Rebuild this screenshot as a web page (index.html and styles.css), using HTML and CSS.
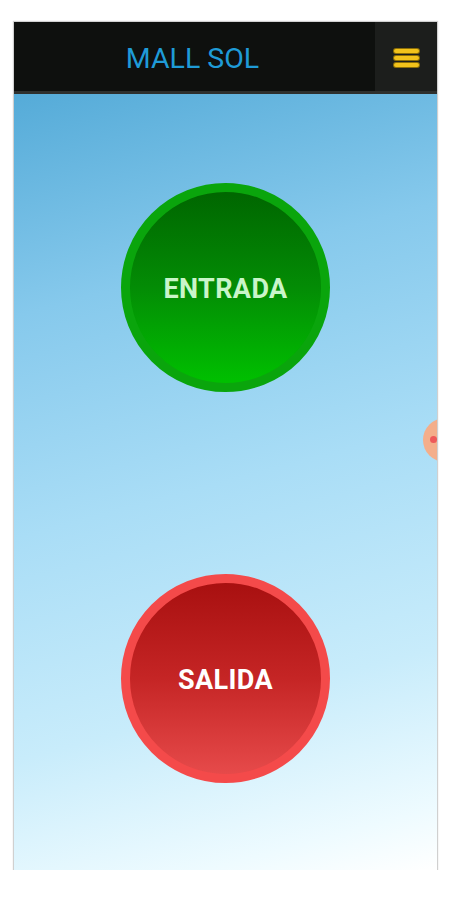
FILE: index.html
```html
<!DOCTYPE html>
<html lang="es">
<head>
<meta charset="utf-8">
<title>MALL SOL</title>
<link rel="stylesheet" href="styles.css">
</head>
<body>
<div class="phone">
  <header class="topbar">
    <h1 class="title">MALL SOL</h1>
    <button class="menu" aria-label="menu">
      <span class="bar"></span><span class="bar"></span><span class="bar"></span>
    </button>
  </header>
  <main class="content">
    <button class="circle entrada"><span>ENTRADA</span></button>
    <button class="circle salida"><span>SALIDA</span></button>
    <div class="blob"><span class="dot"></span></div>
  </main>
</div>
</body>
</html>
```

FILE: styles.css
```css
* { box-sizing: border-box; }
html, body { margin: 0; padding: 0; background: #ffffff; }
body { font-family: Roboto, "Noto Sans", sans-serif; }

.phone {
  margin: 22px 0 0 14px;
  width: 423px;
  height: 848px;
  display: flex;
  flex-direction: column;
  box-shadow: 0 0 1px 1px rgba(120,120,120,0.35);
  overflow: hidden;
}

.topbar {
  height: 72px;
  flex: none;
  display: flex;
  background: #0e100e;
  border-bottom: 3px solid #2e302e;
}
.title {
  flex: 1;
  margin: 0;
  display: flex;
  align-items: center;
  justify-content: center;
  padding: 4px 4px 0 0;
  font-weight: 400;
  font-size: 28.5px;
  color: #1f9bd7;
}
.menu {
  width: 62px;
  border: 0;
  padding: 2px 0 0 0;
  background: #1c1e1c;
  display: flex;
  flex-direction: column;
  align-items: center;
  justify-content: center;
  gap: 3px;
}
.bar {
  display: block;
  width: 25px;
  height: 4px;
  border-radius: 2px;
  background: #f2c21b;
  box-shadow: 0 0 0 1px #8a6d08;
}

.content {
  position: relative;
  flex: 1;
  display: flex;
  flex-direction: column;
  align-items: center;
  padding-top: 89px;
  gap: 182px;
  background: linear-gradient(165deg, #55abd8 0%, #86c9ec 25%, #a9ddf6 50%, #c8ecfb 75%, #eefbff 93%, #ffffff 100%);
}

.circle {
  width: 209px;
  height: 209px;
  border-radius: 50%;
  padding: 0;
  display: flex;
  align-items: center;
  justify-content: center;
  font-family: Roboto, "Noto Sans", sans-serif;
  font-weight: 700;
  font-size: 27px;
  letter-spacing: 0.4px;
}
.circle span { padding-top: 2px; }

.entrada {
  border: 9px solid #0aa50c;
  background: linear-gradient(180deg, #006600 0%, #038c05 50%, #00c000 100%);
  color: #c9f5c9;
}
.salida {
  border: 9px solid #f44a4a;
  background: linear-gradient(180deg, #a81010 0%, #c52525 50%, #e64a4a 100%);
  color: #ffffff;
}

.blob {
  position: absolute;
  right: -30px;
  top: 324px;
  width: 44px;
  height: 44px;
  border-radius: 50%;
  background: #f4ae8a;
}
.dot {
  position: absolute;
  left: 7px;
  top: 18px;
  width: 7px;
  height: 7px;
  border-radius: 50%;
  background: #ee5a5a;
}
```
